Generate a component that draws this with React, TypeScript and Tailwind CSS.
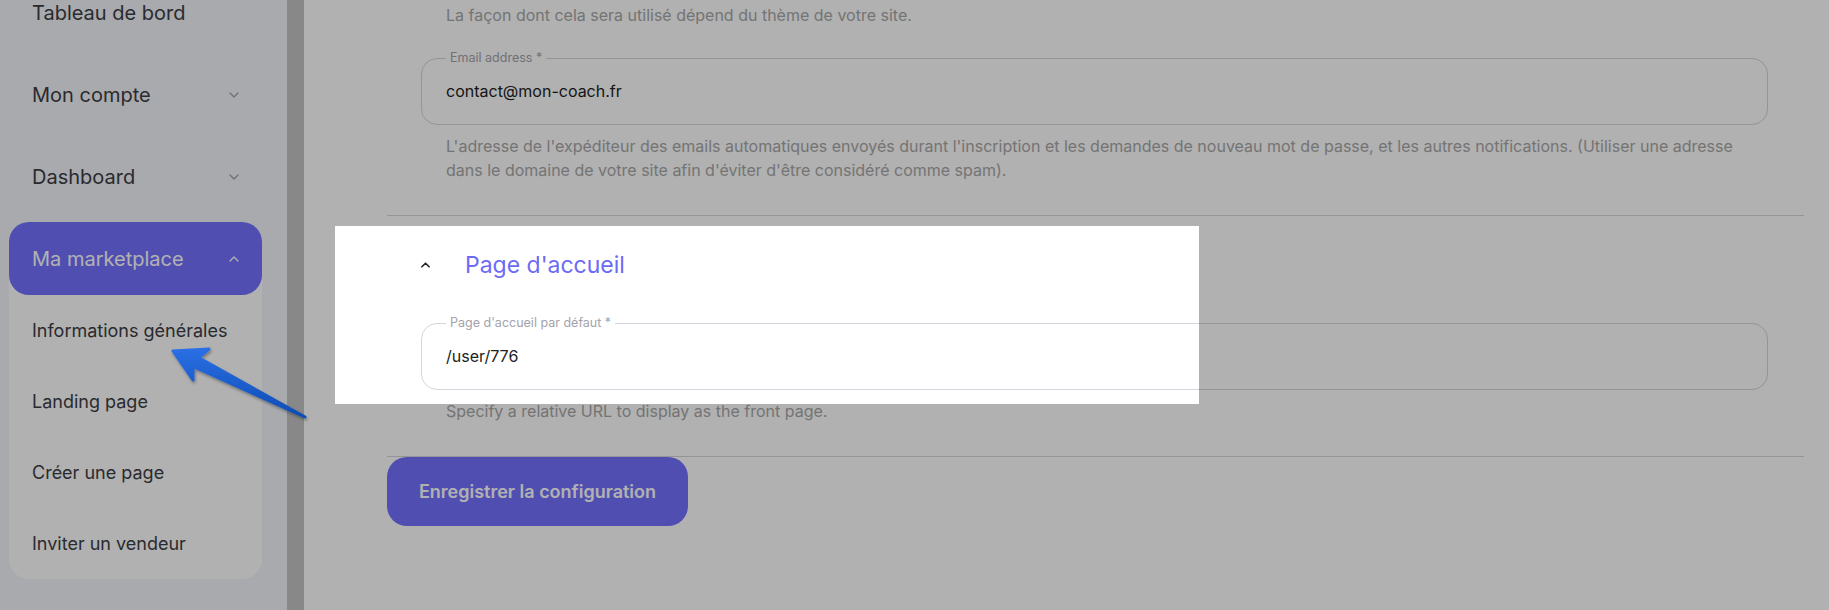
import React from "react";

const ChevronDown = ({ color = "#9ca3af" }: { color?: string }) => (
  <svg width="10" height="6" viewBox="0 0 10 6" fill="none">
    <polyline points="1,1 5,5 9,1" stroke={color} strokeWidth="1.3" strokeLinecap="round" strokeLinejoin="round" />
  </svg>
);

const ChevronUp = ({ color = "#ffffff", width = 1.3 }: { color?: string; width?: number }) => (
  <svg width="10" height="6" viewBox="0 0 10 6" fill="none">
    <polyline points="1,5 5,1 9,5" stroke={color} strokeWidth={width} strokeLinecap="round" strokeLinejoin="round" />
  </svg>
);

const NavItem = ({ label, chevron }: { label: string; chevron?: boolean }) => (
  <div className="h-[73px] flex items-center justify-between pl-[23px] pr-[23px] text-[20px] text-[#3d3d44]">
    <span>{label}</span>
    {chevron && <ChevronDown />}
  </div>
);

const SubItem = ({ label }: { label: string }) => (
  <div className="h-[71px] flex items-center pl-[23px] text-[18px] text-[#3d3d44]">{label}</div>
);

const Field = ({ legend, value }: { legend: string; value: string }) => (
  <fieldset className="border border-[#d5d5dd] rounded-2xl px-[24px] pt-[13px] pb-[21px]">
    <legend className="px-[4px] text-[12.5px] leading-[16px] text-[#a3a3ab]">{legend}</legend>
    <div className="text-[16px] leading-[24px] text-[#222222]">{value}</div>
  </fieldset>
);

const Help = ({ children }: { children: React.ReactNode }) => (
  <p className="pl-[25px] text-[16px] leading-[24px] text-[#a8a8a8]">{children}</p>
);

export default function App() {
  return (
    <div className="relative w-[1829px] h-[610px] overflow-hidden flex bg-white font-['Inter','Noto_Sans',sans-serif]">
      {/* Sidebar */}
      <aside className="w-[287px] shrink-0 bg-[#f3f5fa] pl-[9px] pr-[25px]">
        <div className="-mt-[24px] flex flex-col gap-[9px]">
          <NavItem label="Tableau de bord" />
          <NavItem label="Mon compte" chevron />
          <NavItem label="Dashboard" chevron />
          <div className="rounded-[20px] bg-white">
            <div className="h-[73px] flex items-center justify-between pl-[23px] pr-[23px] rounded-[20px] bg-[#7472ff] text-[20px] text-white">
              <span>Ma marketplace</span>
              <ChevronUp />
            </div>
            <SubItem label="Informations générales" />
            <SubItem label="Landing page" />
            <SubItem label="Créer une page" />
            <SubItem label="Inviter un vendeur" />
          </div>
        </div>
      </aside>
      <div className="w-[17px] shrink-0 bg-[#c4c4c4]" />

      {/* Main content */}
      <main className="flex-1 pl-[83px] pr-[25px]">
        <section className="pt-[3px] pb-[33px] border-b border-[#d5d5dd]">
          <div className="pl-[34px] pr-[36px]">
            <Help>La façon dont cela sera utilisé dépend du thème de votre site.</Help>
            <div className="mt-[23px]">
              <Field legend="Email address *" value="contact@mon-coach.fr" />
            </div>
            <div className="mt-[9px]">
              <Help>
                L'adresse de l'expéditeur des emails automatiques envoyés durant l'inscription et les demandes de nouveau mot de passe, et les autres notifications. (Utiliser une adresse dans le domaine de votre site afin d'éviter d'être considéré comme spam).
              </Help>
            </div>
          </div>
        </section>

        <section className="pt-[33px] pb-[33px] border-b border-[#d5d5dd]">
          <div className="pl-[34px] pr-[36px]">
            <div className="h-[32px] flex items-center">
              <div className="w-[9px] flex justify-center">
                <ChevronUp color="#222222" width={1.8} />
              </div>
              <h2 className="ml-[35px] text-[23px] leading-[32px] text-[#6d6af5]">Page d'accueil</h2>
            </div>
            <div className="mt-[34px]">
              <Field legend="Page d'accueil par défaut *" value="/user/776" />
            </div>
            <div className="mt-[9px]">
              <Help>Specify a relative URL to display as the front page.</Help>
            </div>
          </div>
        </section>

        <button className="w-[301px] h-[69px] rounded-[20px] bg-[#7472ff] text-white text-[18px] font-semibold">
          Enregistrer la configuration
        </button>
      </main>

      {/* Tutorial spotlight */}
      <div className="absolute left-[335px] top-[226px] w-[864px] h-[178px] shadow-[0_0_0_3000px_rgba(0,0,0,0.306)] pointer-events-none z-10" />

      {/* Pointer arrow */}
      <svg className="absolute left-[160px] top-[330px] z-20" width="160" height="100" viewBox="0 0 160 100">
        <defs>
          <linearGradient id="arrowFill" x1="0" y1="0" x2="0" y2="1">
            <stop offset="0" stopColor="#2a6fe4" />
            <stop offset="1" stopColor="#0e4db5" />
          </linearGradient>
          <filter id="arrowShadow" x="-20%" y="-20%" width="140%" height="140%">
            <feDropShadow dx="1" dy="2" stdDeviation="1.5" floodColor="#000" floodOpacity="0.35" />
          </filter>
        </defs>
        <polygon
          points="13,21 49,19 38.5,27.5 145,87 33,36.5 33,50"
          fill="url(#arrowFill)"
          stroke="url(#arrowFill)"
          strokeWidth="3"
          strokeLinejoin="round"
          filter="url(#arrowShadow)"
        />
      </svg>
    </div>
  );
}
